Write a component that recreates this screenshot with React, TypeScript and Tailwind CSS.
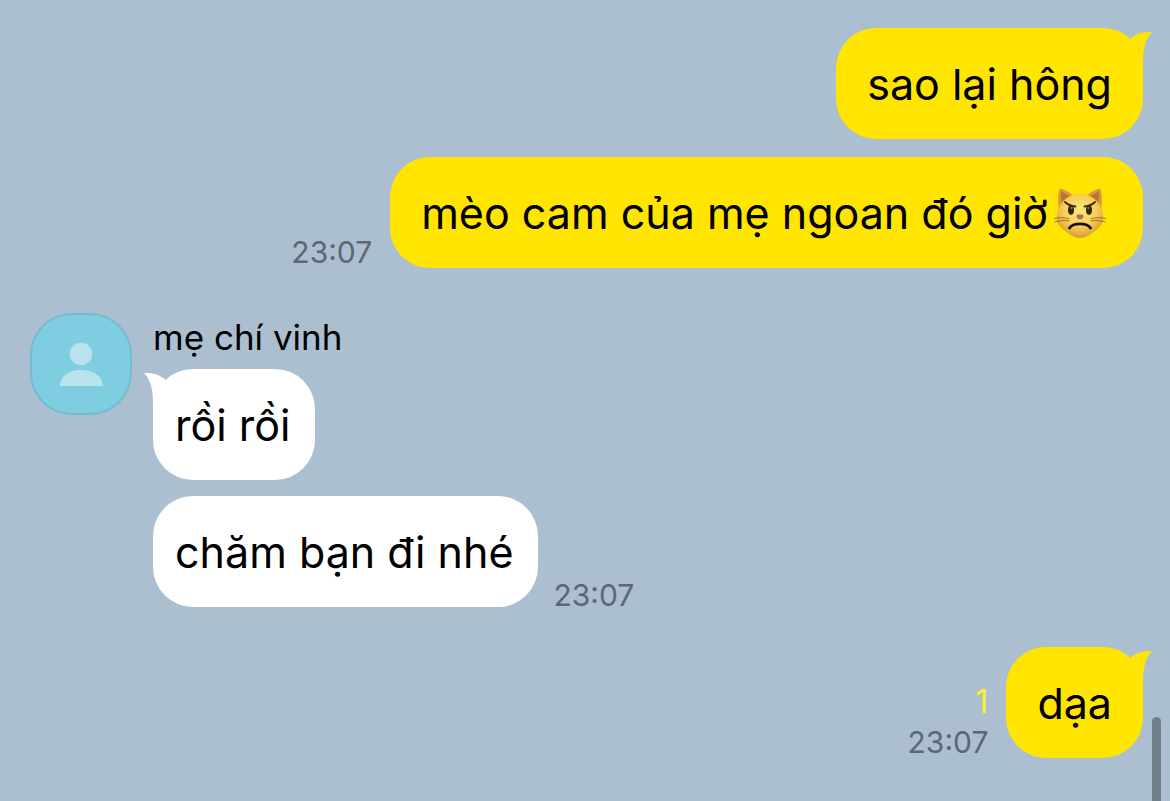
import clsx from "clsx";
import { ReactNode } from "react";

type Message = {
  id: number;
  content: ReactNode;
  time?: string;
  unread?: number;
  tail?: boolean;
};

type Group = {
  id: number;
  mine: boolean;
  sender?: string;
  messages: Message[];
};

function PoutingCat() {
  return (
    <svg
      viewBox="0 0 56 54"
      role="img"
      aria-label="pouting cat"
      className="mx-1 h-[54px] w-14 shrink-0"
    >
      <defs>
        <radialGradient id="catFace" cx="50%" cy="38%" r="62%">
          <stop offset="0" stopColor="#fde57a" />
          <stop offset="0.55" stopColor="#f8cf58" />
          <stop offset="1" stopColor="#d99a35" />
        </radialGradient>
      </defs>
      <path d="M7 25 C5.500 15 6 6 8 2.500 C14.500 4 20 8 24 12 Z" fill="#d99a3c" />
      <path d="M49 25 C50.500 15 50 6 48 2.500 C41.500 4 36 8 32 12 Z" fill="#d99a3c" />
      <path d="M9.500 17 C8.500 11 8.500 8 9.500 5.500 C13.500 7 17 9.500 19 12.500 Z" fill="#b9763c" />
      <path d="M46.500 17 C47.500 11 47.500 8 46.500 5.500 C42.500 7 39 9.500 37 12.500 Z" fill="#b9763c" />
      <path
        d="M28 8 C39 8 48.500 15 50.500 26 C52 32 51.500 37 47 41.500 C41 47 34 52 28 52 C22 52 15 47 9 41.500 C4.500 37 4 32 5.500 26 C7.500 15 17 8 28 8 Z"
        fill="url(#catFace)"
      />
      <g fill="none" stroke="#8a6a2d" strokeWidth="0.9" strokeLinecap="round">
        <path d="M17 33 C12 31 7 31.500 2.500 32.500" />
        <path d="M17 35 C12 34 7 34.500 3 36" />
        <path d="M39 33 C44 31 49 31.500 53.500 32.500" />
        <path d="M39 35 C44 34 49 34.500 53 36" />
      </g>
      <ellipse cx="19" cy="24" rx="3" ry="4.800" fill="#33270f" />
      <ellipse cx="37" cy="24" rx="3" ry="4.800" fill="#33270f" />
      <circle cx="19.500" cy="22" r="1" fill="#8f7d4c" />
      <circle cx="36.500" cy="22" r="1" fill="#8f7d4c" />
      <path d="M13 16 C15.500 18.500 19 20 23.500 20.500" fill="none" stroke="#3c2c0c" strokeWidth="1.800" strokeLinecap="round" />
      <path d="M43 16 C40.500 18.500 37 20 32.500 20.500" fill="none" stroke="#3c2c0c" strokeWidth="1.800" strokeLinecap="round" />
      <path d="M24.500 29.500 C25 28 31 28 31.500 29.500 C32 31.500 29.500 33.500 28 33.500 C26.500 33.500 24 31.500 24.500 29.500 Z" fill="#a86f56" />
      <path d="M17.500 42 C21 36.500 35 36.500 38.500 42" fill="none" stroke="#141006" strokeWidth="2.800" strokeLinecap="round" />
    </svg>
  );
}

function Tail({ mine }: { mine: boolean }) {
  return (
    <svg
      viewBox="0 0 34 44"
      aria-hidden="true"
      className={clsx(
        "absolute top-0 h-11 w-[34px]",
        mine ? "-right-[9px] text-[#ffe500]" : "-left-[9px] -scale-x-100 text-white"
      )}
    >
      <path
        d="M13 10.500 C18 5.500 25 3.500 34 4 C28 10 25 20 25 34 L25 44 L6 34 Z"
        fill="currentColor"
      />
    </svg>
  );
}

function Avatar() {
  return (
    <div className="size-[102px] shrink-0 rounded-[42px] border-2 border-[#75bccf] bg-[#7fcde1]">
      <svg viewBox="0 0 98 98" className="size-full" fill="#b8e3ec" aria-hidden="true">
        <circle cx="49" cy="39" r="11.200" />
        <path d="M28 71 C28 60 38 55 49 55 C60 55 70.500 60 70.500 71 Z" />
      </svg>
    </div>
  );
}

function Bubble({ message, mine }: { message: Message; mine: boolean }) {
  return (
    <div className={clsx("flex items-end", mine ? "flex-row-reverse gap-[18px]" : "gap-[15px]")}>
      <div
        className={clsx(
          "relative flex items-center rounded-[40px] pt-7 pb-[27px] text-[43px] leading-14",
          mine ? "bg-[#ffe500] px-[31px]" : "bg-white pr-[25px] pl-[22px]"
        )}
      >
        {message.tail && <Tail mine={mine} />}
        {message.content}
      </div>
      {message.time && (
        <div
          className={clsx(
            "flex flex-col items-end gap-2 text-[30px] leading-8 text-[#5b6873]",
            !mine && "-mb-1"
          )}
        >
          {message.unread && <span className="text-[32px] leading-8 text-[#ffee32]">{message.unread}</span>}
          <time>{message.time}</time>
        </div>
      )}
    </div>
  );
}

const groups: Group[] = [
  {
    id: 1,
    mine: true,
    messages: [
      { id: 1, content: "sao lại hông", tail: true },
      {
        id: 2,
        content: (
          <>
            mèo cam của mẹ ngoan đó giờ
            <PoutingCat />
          </>
        ),
        time: "23:07",
      },
    ],
  },
  {
    id: 2,
    mine: false,
    sender: "mẹ chí vinh",
    messages: [
      { id: 3, content: "rồi rồi", tail: true },
      { id: 4, content: "chăm bạn đi nhé", time: "23:07" },
    ],
  },
  {
    id: 3,
    mine: true,
    messages: [{ id: 5, content: "dạa", time: "23:07", unread: 1, tail: true }],
  },
];

export default function App() {
  return (
    <main className="relative flex min-h-screen flex-col overflow-hidden bg-[#abbfd0] pt-7 pr-[27px] pb-10 pl-[30px] font-['Inter','Noto_Sans',sans-serif] text-black">
      {groups.map((group) =>
        group.mine ? (
          <section key={group.id} className="flex flex-col items-end gap-[18px]">
            {group.messages.map((message) => (
              <Bubble key={message.id} message={message} mine />
            ))}
          </section>
        ) : (
          <section key={group.id} className="mt-[45px] mb-10 flex items-start gap-[21px]">
            <Avatar />
            <div className="flex flex-col items-start">
              <h2 className="mb-2 text-[35px] leading-12">{group.sender}</h2>
              <div className="flex flex-col items-start gap-4">
                {group.messages.map((message) => (
                  <Bubble key={message.id} message={message} mine={false} />
                ))}
              </div>
            </div>
          </section>
        )
      )}
      <div className="absolute right-[9px] -bottom-2 h-[92px] w-[9px] rounded-full bg-[#6e7e8a]" />
    </main>
  );
}
